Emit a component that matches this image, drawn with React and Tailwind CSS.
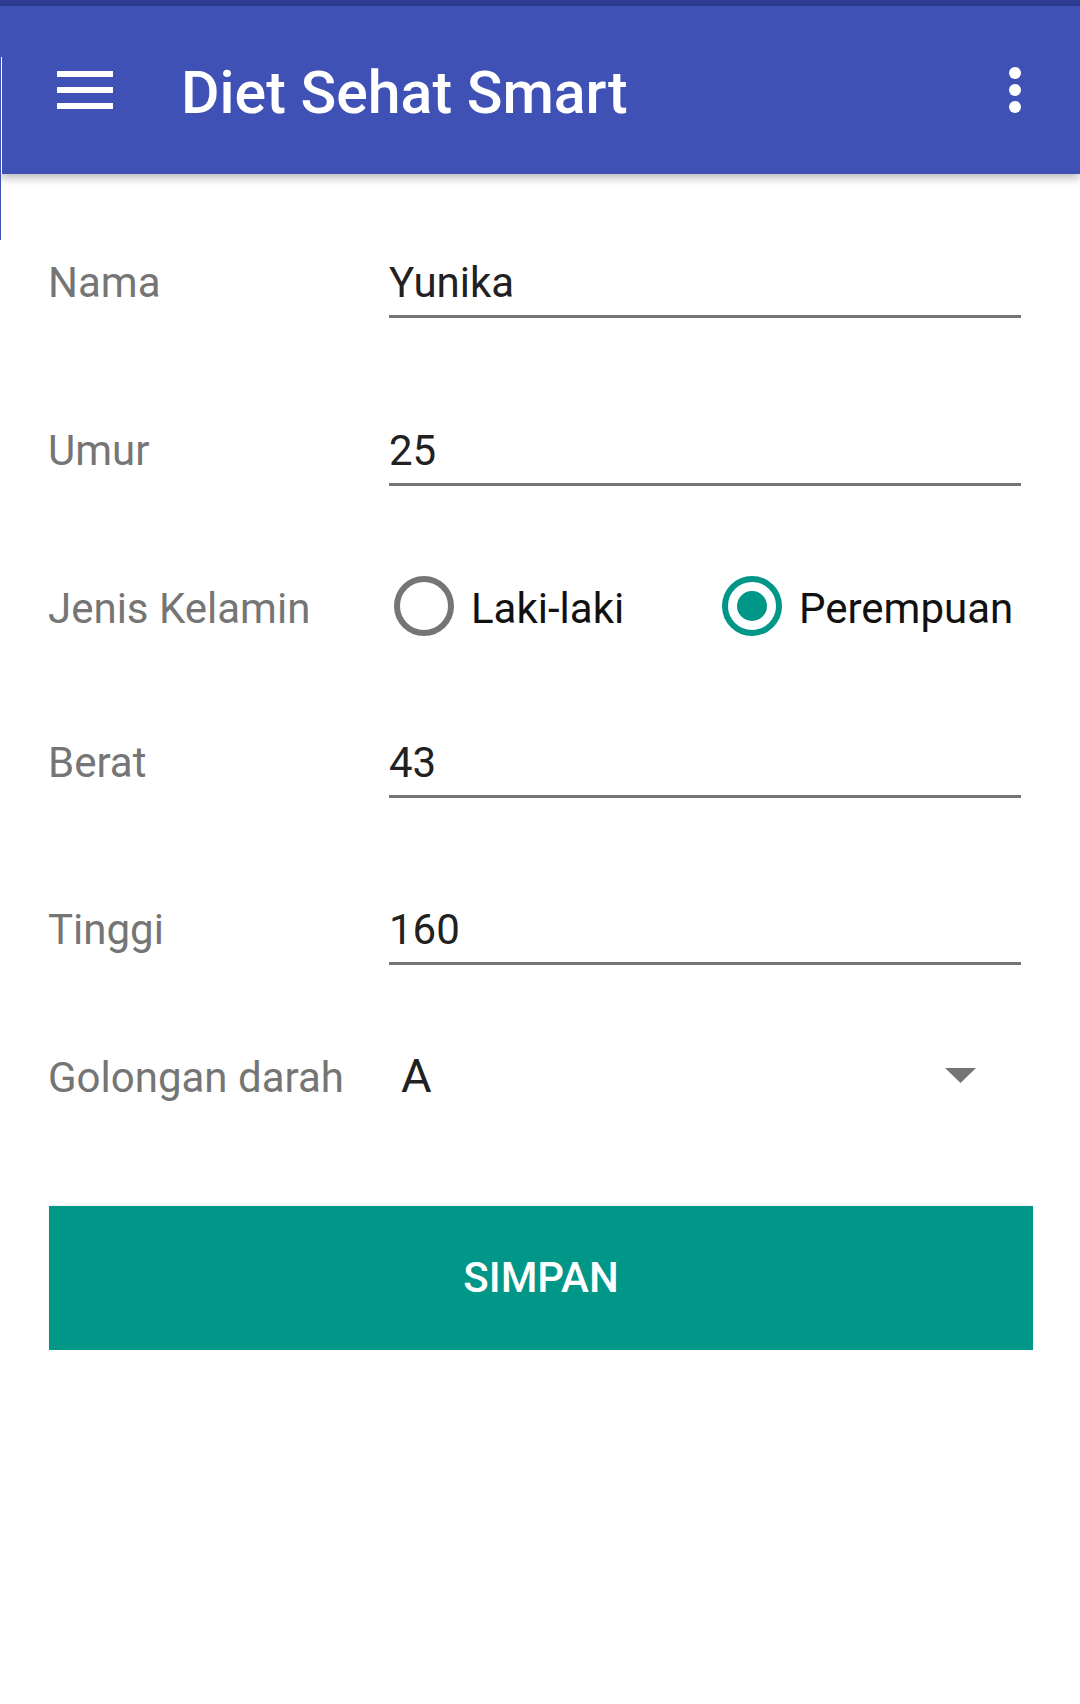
import React from 'react';

const font = "font-['Roboto','Liberation_Sans',sans-serif]";

function TextRow({ label, value, className = '' }) {
  return (
    <div className={`flex items-baseline pl-[48px] pr-[59px] ${className}`}>
      <div className="w-[341px] shrink-0 text-[42px] leading-[42px] text-[#757575]">{label}</div>
      <div className="flex-1 border-b-[3px] border-[#757575] pb-[11px] text-[42px] leading-[42px] text-[#212121]">
        {value}
      </div>
    </div>
  );
}

function Radio({ checked }) {
  if (checked) {
    return (
      <div className="flex h-[60px] w-[60px] shrink-0 items-center justify-center rounded-full border-[6px] border-[#009688]">
        <div className="h-[30px] w-[30px] rounded-full bg-[#009688]" />
      </div>
    );
  }
  return <div className="h-[60px] w-[60px] shrink-0 rounded-full border-[6px] border-[#757575]" />;
}

export default function App() {
  return (
    <div className={`relative min-h-[1704px] w-[1080px] bg-white ${font}`}>
      {/* status strip + toolbar */}
      <div className="h-[6px] bg-[#2f3c93]" />
      <div className="relative z-10 flex h-[168px] items-center bg-[#3F51B5] shadow-[0_4px_9px_rgba(0,0,0,0.28)]">
        <div className="ml-[57px] flex w-[56px] flex-col gap-[10px]">
          <div className="h-[6px] bg-white" />
          <div className="h-[6px] bg-white" />
          <div className="h-[6px] bg-white" />
        </div>
        <div className="ml-[68px] mt-[5px] text-[59px] font-medium leading-[59px] text-white">Diet Sehat Smart</div>
        <div className="ml-auto mr-[59px] flex flex-col gap-[5px]">
          <div className="h-[12px] w-[12px] rounded-full bg-white" />
          <div className="h-[12px] w-[12px] rounded-full bg-white" />
          <div className="h-[12px] w-[12px] rounded-full bg-white" />
        </div>
      </div>
      {/* left edge artifact */}
      <div className="absolute left-[1px] top-[57px] z-20 h-[117px] w-[1px] bg-white" />
      <div className="absolute left-0 top-[174px] z-20 h-[66px] w-[1px] bg-[#3F51B5]" />

      <div className="pt-[88px]">
        <TextRow label="Nama" value="Yunika" />
        <TextRow label="Umur" value="25" className="mt-[112px]" />

        <div className="mt-[90px] flex h-[60px] items-center pl-[48px] pr-[59px]">
          <div className="w-[341px] shrink-0 pt-[6px] text-[42px] leading-[42px] text-[#757575]">Jenis Kelamin</div>
          <div className="flex flex-1 items-center">
            <div className="ml-[5px] flex w-[328px] items-center">
              <Radio checked={false} />
              <span className="ml-[17px] pt-[6px] text-[42px] leading-[42px] text-[#111111]">Laki-laki</span>
            </div>
            <div className="flex items-center">
              <Radio checked />
              <span className="ml-[17px] pt-[6px] text-[42px] leading-[42px] text-[#111111]">Perempuan</span>
            </div>
          </div>
        </div>

        <TextRow label="Berat" value="43" className="mt-[106px]" />
        <TextRow label="Tinggi" value="160" className="mt-[111px]" />

        <div className="mt-[87px] flex items-baseline pl-[48px] pr-[59px]">
          <div className="w-[341px] shrink-0 text-[42px] leading-[42px] text-[#757575]">Golongan darah</div>
          <div className="flex flex-1 items-center">
            <span className="pl-[12px] text-[47px] leading-[47px] text-[#212121]">A</span>
            <svg className="ml-auto mr-[45px]" width="31" height="15" viewBox="0 0 31 15">
              <path d="M0 0 L31 0 L15.5 15 Z" fill="#757575" />
            </svg>
          </div>
        </div>

        <button className="ml-[49px] mt-[107px] flex h-[144px] w-[984px] items-center justify-center bg-[#009688] text-[42px] font-medium leading-[42px] text-white shadow-[0_-1px_2px_rgba(0,0,0,0.08)]">
          SIMPAN
        </button>
      </div>
    </div>
  );
}
